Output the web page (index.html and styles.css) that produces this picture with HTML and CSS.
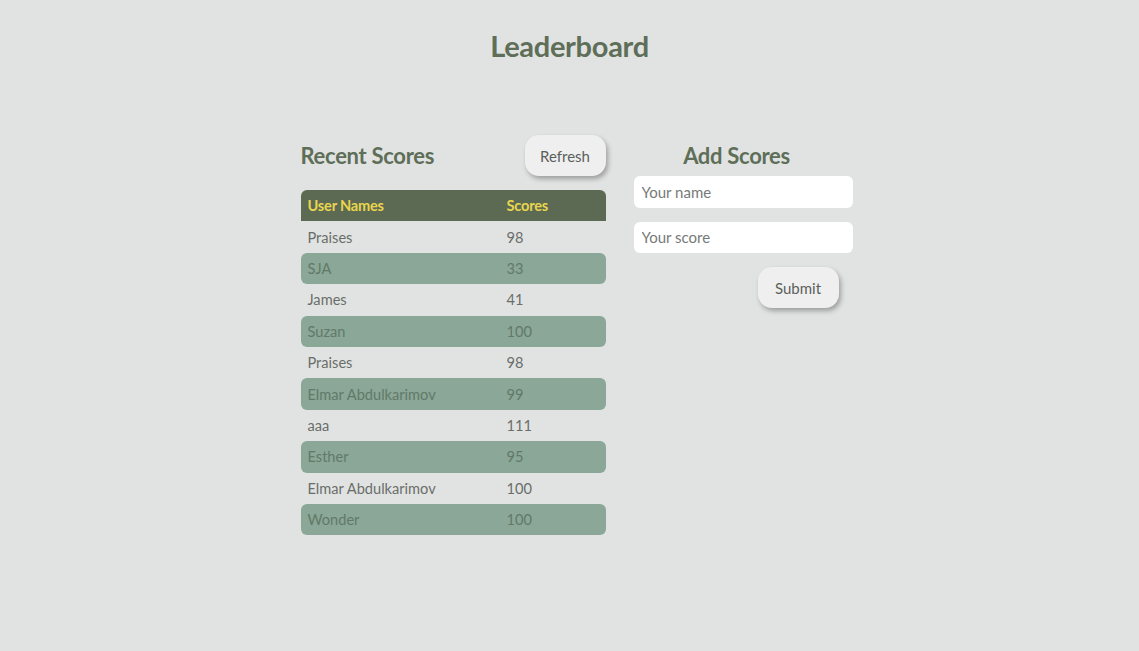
FILE: index.html
```html
<!DOCTYPE html>
<html>
<head>
<meta charset="utf-8">
<link rel="stylesheet" href="styles.css">
</head>
<body>
<h1 class="title">Leaderboard</h1>
<main class="board">
  <section class="recent">
    <div class="recent-head">
      <h2 class="section-title">Recent Scores</h2>
      <button class="btn">Refresh</button>
    </div>
    <table class="scores">
      <thead>
        <tr><th class="name">User Names</th><th>Scores</th></tr>
      </thead>
      <tbody>
        <tr><td class="name">Praises</td><td>98</td></tr>
        <tr><td class="name">SJA</td><td>33</td></tr>
        <tr><td class="name">James</td><td>41</td></tr>
        <tr><td class="name">Suzan</td><td>100</td></tr>
        <tr><td class="name">Praises</td><td>98</td></tr>
        <tr><td class="name">Elmar Abdulkarimov</td><td>99</td></tr>
        <tr><td class="name">aaa</td><td>111</td></tr>
        <tr><td class="name">Esther</td><td>95</td></tr>
        <tr><td class="name">Elmar Abdulkarimov</td><td>100</td></tr>
        <tr><td class="name">Wonder</td><td>100</td></tr>
      </tbody>
    </table>
  </section>
  <section class="add">
    <h2 class="section-title add-title">Add Scores</h2>
    <form class="add-form">
      <input class="field" type="text" placeholder="Your name">
      <input class="field" type="text" placeholder="Your score">
      <button class="btn submit" type="button">Submit</button>
    </form>
  </section>
</main>
</body>
</html>
```
FILE: styles.css
```css
* { box-sizing: border-box; }
html, body {
  margin: 0;
  padding: 0;
  background: #e1e3e2;
  font-family: Lato, "Open Sans", sans-serif;
  height: 100%;
}
.title {
  margin: 28px 0 0;
  line-height: 36px;
  font-size: 29px;
  font-weight: 700;
  text-align: center;
  color: #5e6e58;
  letter-spacing: -0.3px;
}
.board {
  width: 568px;
  margin: 71px auto 0;
  padding-left: 15px;
  display: flex;
  gap: 28px;
  align-items: flex-start;
}
.recent { width: 305px; }
.recent-head {
  display: flex;
  justify-content: space-between;
  align-items: center;
  height: 41px;
  margin-bottom: 14px;
}
.section-title {
  margin: 0;
  font-size: 22px;
  line-height: 26px;
  font-weight: 700;
  color: #5e6e58;
  letter-spacing: -0.3px;
}
.btn {
  border: none;
  background: #efefef;
  border-radius: 14px;
  box-shadow: 2px 3px 5px rgba(0, 0, 0, 0.3);
  font-family: Lato, "Open Sans", sans-serif;
  font-size: 15px;
  color: #5b5f5b;
  width: 81px;
  height: 41px;
  padding: 0;
}
.scores {
  width: 305px;
  border-collapse: separate;
  border-spacing: 0;
  font-size: 14.6px;
}
.scores th, .scores td {
  height: 31.4px;
  padding: 0 7px;
  text-align: left;
  vertical-align: middle;
}
.scores .name { width: 199px; }
.scores th {
  background: #5c6a53;
  color: #e9d54f;
  font-weight: 700;
  letter-spacing: -0.2px;
}
.scores th:first-child { border-top-left-radius: 6px; }
.scores th:last-child { border-top-right-radius: 6px; }
.scores td { color: #6a6e6a; }
.scores tbody tr:nth-child(even) td {
  background: #8aa797;
  color: #627969;
}
.scores tbody tr:nth-child(even) td:first-child { border-radius: 6px 0 0 6px; }
.scores tbody tr:nth-child(even) td:last-child { border-radius: 0 6px 6px 0; }
.add { width: 219px; }
.add-title {
  margin-top: 8px;
  margin-bottom: 7px;
  text-align: center;
  padding-right: 13px;
}
.add-form {
  display: flex;
  flex-direction: column;
  gap: 14px;
}
.field {
  width: 219px;
  height: 31.5px;
  border: none;
  border-radius: 6px;
  background: #ffffff;
  padding: 0 8px;
  font-family: Lato, "Open Sans", sans-serif;
  font-size: 15px;
  color: #333;
}
.field::placeholder { color: #777a77; }
.submit {
  align-self: flex-end;
  margin-right: 14px;
}
```
